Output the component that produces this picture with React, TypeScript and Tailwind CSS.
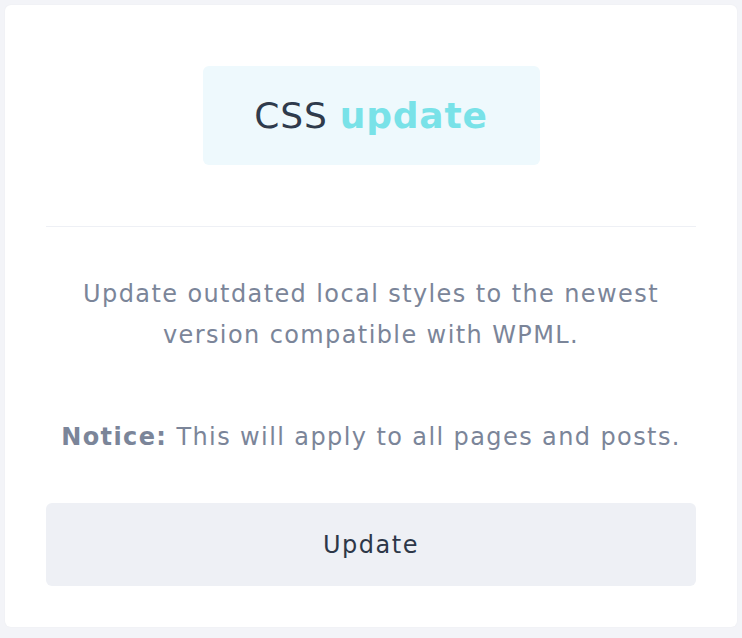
export default function App() {
    return (
        <div className="min-h-screen bg-[#f3f4f8] p-[5px] pb-[10px]" style={{ fontFamily: '"DejaVu Sans", "Liberation Sans", sans-serif' }}>
            <div className="bg-white rounded-md px-[41px] pt-[61px] pb-[41px] shadow-[0_0_2px_rgba(0,0,0,0.04)]">
                <div className="flex justify-center">
                    <div className="w-[337px] h-[99px] rounded-md bg-[#eef9fd] flex items-center justify-center">
                        <h2 className="text-[36px] tracking-[0.8px] text-[#2f3b4c]">
                            CSS <span className="text-[#79e2e8] font-bold">update</span>
                        </h2>
                    </div>
                </div>

                <hr className="mt-[61px] border-0 h-px bg-[#eef0f5]" />

                <div className="mt-[47px] text-center text-[24px] leading-[41px] tracking-[1.4px] text-[#7b8599]">
                    <p className="max-w-[610px] mx-auto">
                        Update outdated local styles to the newest version compatible with WPML.
                    </p>
                    <p className="mt-[61px]">
                        <span className="font-bold">Notice:</span> This will apply to all pages and posts.
                    </p>
                </div>

                <button className="mt-[45px] w-full h-[83px] rounded-md bg-[#eef0f5] text-[24px] tracking-[1.5px] text-[#2d3748]">
                    Update
                </button>
            </div>
        </div>
    );
}
